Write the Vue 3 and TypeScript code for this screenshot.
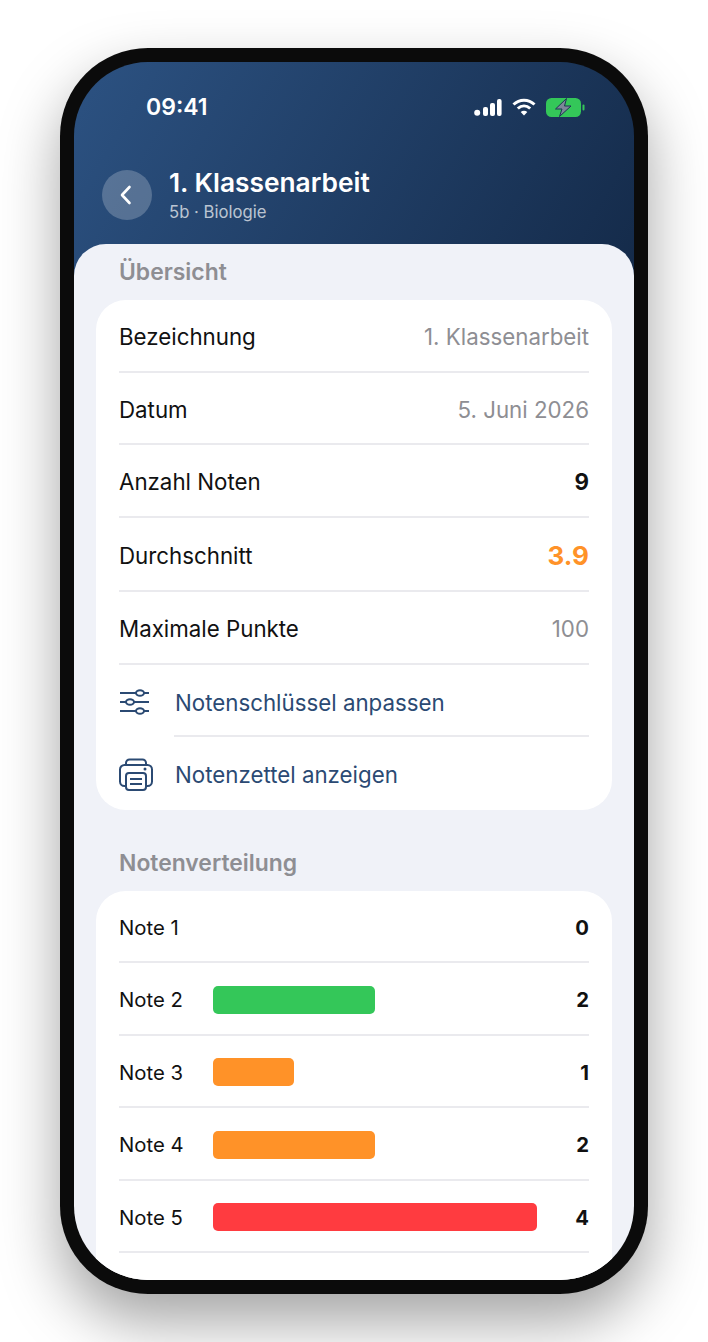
<template>
  <div class="page">
    <div class="phone">
      <div class="screen">
        <header class="header">
          <div class="status-bar">
            <span class="time">09:41</span>
            <div class="status-icons">
              <svg width="28" height="17" viewBox="0 0 28 17" fill="#fff">
                <circle cx="3.2" cy="13.8" r="3" />
                <rect x="9" y="8" width="5" height="9" rx="2" />
                <rect x="16" y="4" width="5" height="13" rx="2" />
                <rect x="23" y="0" width="4.6" height="17" rx="2" />
              </svg>
              <svg width="24" height="18" viewBox="0 0 24 18" fill="none" stroke="#fff" stroke-width="3">
                <path d="M1.5 6.5C7.5 0.7 16.5 0.7 22.5 6.5" />
                <path d="M5.8 10.5C9.5 7 14.5 7 18.2 10.5" />
                <path d="M12 17.5 8.7 14C10.5 12.4 13.5 12.4 15.3 14Z" fill="#fff" stroke="none" />
              </svg>
              <svg width="39" height="19" viewBox="0 0 39 19">
                <rect x="0" y="0" width="35" height="19" rx="5.5" fill="#34c759" />
                <rect x="36.5" y="6.5" width="2" height="6" rx="1" fill="#34c759" />
                <path d="M20.5 0.5 9.5 11H16L13.5 18.5 25 8H18.5Z" fill="#7d8699" stroke="#1c3554" stroke-width="1" />
              </svg>
            </div>
          </div>
          <div class="nav">
            <button class="back">
              <svg width="14" height="20" viewBox="0 0 14 20" fill="none" stroke="#fff" stroke-width="2.6" stroke-linecap="round" stroke-linejoin="round">
                <path d="M10.5 2 3 10l7.5 8" />
              </svg>
            </button>
            <div class="nav-text">
              <h1>1. Klassenarbeit</h1>
              <p>5b · Biologie</p>
            </div>
          </div>
        </header>

        <main class="sheet">
          <h2 class="section-title first">Übersicht</h2>
          <section class="card">
            <div v-for="row in overview" :key="row.label" class="row" :class="{ tall: row.kind === 'average' }">
              <span>{{ row.label }}</span>
              <span :class="row.kind">{{ row.value }}</span>
            </div>
            <div class="row action">
              <svg class="action-icon" width="34" height="30" viewBox="0 0 34 30" fill="none" stroke="#2b4a73" stroke-width="2">
                <path d="M1 6h16M25 6h5M1 15h6M15 15h15M1 24h16M25 24h5" />
                <ellipse cx="21" cy="6" rx="4" ry="2.8" />
                <ellipse cx="11" cy="15" rx="4" ry="2.8" />
                <ellipse cx="21" cy="24" rx="4" ry="2.8" />
              </svg>
              <span class="action-label">Notenschlüssel anpassen</span>
            </div>
            <div class="row action last">
              <svg class="action-icon" width="34" height="34" viewBox="0 0 34 34" fill="none" stroke="#2b4a73" stroke-width="2" stroke-linejoin="round">
                <path d="M7 7V5a3.5 3.5 0 0 1 3.5-3.5h13A3.5 3.5 0 0 1 27 5v2" />
                <path d="M7 28H5.5A4.5 4.5 0 0 1 1 23.5V11.5A4.5 4.5 0 0 1 5.5 7h23a4.5 4.5 0 0 1 4.5 4.5v12a4.5 4.5 0 0 1-4.5 4.5H27" />
                <rect x="7" y="15" width="20" height="17" rx="3" />
                <path d="M11 21h12M11 26h12" />
                <circle cx="26" cy="11" r="1.5" fill="#2b4a73" stroke="none" />
              </svg>
              <span class="action-label">Notenzettel anzeigen</span>
            </div>
          </section>

          <h2 class="section-title">Notenverteilung</h2>
          <section class="card notes-card">
            <div v-for="note in notes" :key="note.label" class="row note-row">
              <span class="note-label">{{ note.label }}</span>
              <div class="track">
                <div v-if="note.count" class="bar" :style="{ width: note.count * 81 + 'px', background: note.color }"></div>
              </div>
              <span class="count">{{ note.count }}</span>
            </div>
          </section>
        </main>
      </div>
    </div>
  </div>
</template>

<script setup lang="ts">
interface OverviewRow {
  label: string
  value: string
  kind: string
}

interface NoteRow {
  label: string
  count: number
  color: string
}

const overview: OverviewRow[] = [
  { label: 'Bezeichnung', value: '1. Klassenarbeit', kind: 'muted' },
  { label: 'Datum', value: '5. Juni 2026', kind: 'muted' },
  { label: 'Anzahl Noten', value: '9', kind: 'strong' },
  { label: 'Durchschnitt', value: '3.9', kind: 'average' },
  { label: 'Maximale Punkte', value: '100', kind: 'muted' }
]

const notes: NoteRow[] = [
  { label: 'Note 1', count: 0, color: '#34c759' },
  { label: 'Note 2', count: 2, color: '#34c759' },
  { label: 'Note 3', count: 1, color: '#ff9228' },
  { label: 'Note 4', count: 2, color: '#ff9228' },
  { label: 'Note 5', count: 4, color: '#ff3b40' }
]
</script>

<style>
html,
body {
  background: #fff;
}
</style>

<style scoped>
.page {
  width: 708px;
  height: 1342px;
  padding: 48px 60px 0;
  box-sizing: border-box;
  overflow: hidden;
  font-family: Inter, "Liberation Sans", sans-serif;
}

.phone {
  width: 588px;
  height: 1246px;
  padding: 14px;
  box-sizing: border-box;
  background: #0b0b0b;
  border-radius: 88px;
  box-shadow: 0 28px 60px rgba(0, 0, 0, 0.36);
}

.screen {
  height: 100%;
  border-radius: 74px;
  overflow: hidden;
  display: flex;
  flex-direction: column;
  background: linear-gradient(120deg, #2c5282 0%, #142a49 100%) no-repeat top / 100% 230px;
}

.header {
  height: 182px;
  flex: none;
  padding: 0 28px;
  box-sizing: border-box;
  color: #fff;
}

.status-bar {
  height: 90px;
  display: flex;
  justify-content: space-between;
  align-items: center;
  padding: 0 21px 0 44px;
}

.time {
  font-size: 23px;
  font-weight: 600;
}

.status-icons {
  display: flex;
  align-items: center;
  gap: 10px;
}

.nav {
  display: flex;
  align-items: center;
  gap: 17px;
  margin-top: 15px;
}

.back {
  width: 50px;
  height: 50px;
  border: none;
  padding: 0 3px 0 0;
  border-radius: 50%;
  background: rgba(255, 255, 255, 0.22);
  display: flex;
  align-items: center;
  justify-content: center;
}

.nav-text h1 {
  margin: 0;
  font-size: 26.3px;
  line-height: 32px;
  font-weight: 600;
}

.nav-text p {
  margin: 3px 0 0;
  font-size: 16.7px;
  line-height: 20px;
  color: rgba(255, 255, 255, 0.7);
}

.sheet {
  flex: 1;
  min-height: 0;
  overflow: hidden;
  padding: 0 22px;
  background: #f0f2f8;
  border-radius: 32px 32px 0 0;
}

.section-title {
  margin: 40px 0 14px 23px;
  font-size: 22.9px;
  line-height: 27px;
  font-weight: 600;
  color: #8e8e93;
}

.section-title.first {
  margin-top: 15px;
}

.card {
  background: #fff;
  border-radius: 30px;
  padding: 0 23px;
}

.notes-card {
  padding-bottom: 72px;
}

.row {
  height: 72.5px;
  box-sizing: border-box;
  padding-top: 3px;
  border-bottom: 2px solid #eaeaee;
  display: flex;
  align-items: center;
  justify-content: space-between;
  font-size: 22.3px;
  color: #111;
}

.row.tall {
  height: 74.5px;
}

.muted {
  color: #8e8e93;
}

.strong {
  font-weight: 700;
}

.average {
  font-size: 26px;
  font-weight: 700;
  color: #ff9228;
}

.action {
  position: relative;
  justify-content: flex-start;
  border-bottom: none;
}

.action::after {
  content: "";
  position: absolute;
  left: 55px;
  right: 0;
  bottom: 0;
  height: 2px;
  background: #eaeaee;
}

.action.last::after {
  display: none;
}

.action-icon {
  width: 34px;
  flex: none;
  margin-right: 22px;
}

.action-label {
  color: #2b4a73;
}

.note-row {
  justify-content: flex-start;
  font-size: 20.3px;
}

.note-label {
  width: 94px;
  flex: none;
}

.track {
  flex: 1;
}

.bar {
  height: 28px;
  border-radius: 5px;
}

.count {
  font-weight: 700;
}
</style>
